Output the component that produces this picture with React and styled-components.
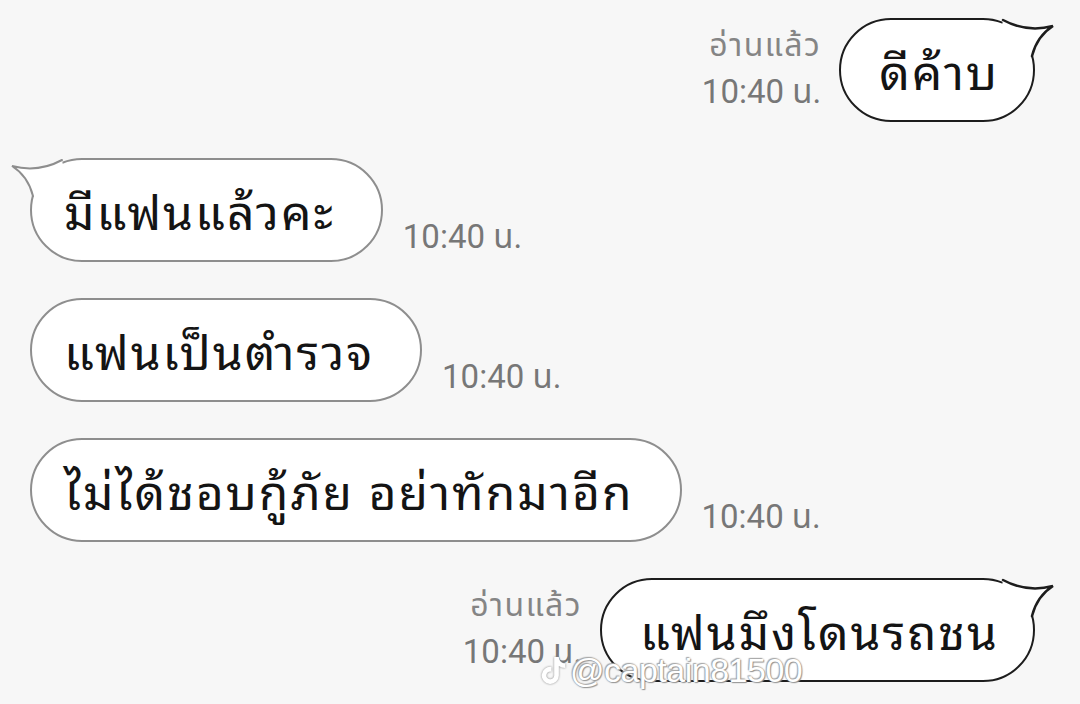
import React from 'react'
import styled, { createGlobalStyle } from 'styled-components'
import { FaTiktok } from 'react-icons/fa'

const GlobalStyle = createGlobalStyle`
body {
  margin: 0;
  background: #f7f7f7;
}
`

const Chat = styled.div`
position: relative;
display: flex;
flex-direction: column;
gap: 36px;
width: 1080px;
height: 704px;
box-sizing: border-box;
padding: 18px 45px 0 30px;
overflow: hidden;
background: #f7f7f7;
font-family: "Noto Sans Thai Looped", "Noto Sans Thai", "Noto Sans", sans-serif;
`

const Row = styled.div`
display: flex;
align-items: flex-end;
justify-content: ${p => (p.$sent ? 'flex-end' : 'flex-start')};
`

const Bubble = styled.div`
position: relative;
display: flex;
align-items: center;
height: 104px;
box-sizing: border-box;
padding: ${p => (p.$sent ? '0 34px 4px 38px' : '0 46px 4px 32px')};
border: ${p => (p.$sent ? '2.5px solid #1d1d1d' : '2px solid #8e8e8e')};
border-radius: 52px;
background: #fff;
color: #141414;
font-size: 48px;
letter-spacing: 2px;
white-space: nowrap;
`

const Tail = styled.svg`
position: absolute;
top: -2px;
${p => (p.$sent ? 'right: -22px; transform: scaleX(-1);' : 'left: -22px;')}
width: 60px;
height: 50px;
overflow: visible;
`

const Time = styled.div`
font-family: Roboto, "Noto Sans Thai", sans-serif;
font-size: 33px;
color: #777;
line-height: 1;
white-space: nowrap;
`

const Stamp = styled(Time)`
margin: 0 0 9px 20px;
`

const Meta = styled.div`
display: flex;
flex-direction: column;
align-items: flex-end;
gap: 14px;
margin: 0 18px 14px 0;
`

const Read = styled(Time)`
font-size: 32px;
letter-spacing: 1.5px;
color: #858585;
`

const Watermark = styled.div`
position: absolute;
left: 540px;
top: 651px;
display: flex;
align-items: center;
gap: 3px;
font-family: "Liberation Sans", Arial, sans-serif;
font-size: 34px;
letter-spacing: -0.5px;
color: #fff;
text-shadow: 0 0 2px #8a8a8a, 1px 1px 1px #9a9a9a, -1px -1px 1px #b0b0b0;
svg {
  filter: drop-shadow(0 0 1px #888);
}
`

function BubbleTail({ sent, stroke }) {
  return (
    <Tail $sent={sent} viewBox="-20 0 60 50">
      <path d="M3 38 Q-2 18 -18 8 Q8 15 32 2 L40 44 Z" fill="#fff" />
      <path
        d="M3 38 Q-2 18 -18 8 Q8 15 32 2"
        fill="none"
        stroke={stroke}
        strokeWidth={sent ? 2.5 : 2}
        strokeLinecap="round"
      />
    </Tail>
  )
}

const messages = [
  { sent: true, text: 'ดีค้าบ', tail: true },
  { sent: false, text: 'มีแฟนแล้วคะ', tail: true },
  { sent: false, text: 'แฟนเป็นตำรวจ' },
  { sent: false, text: 'ไม่ได้ชอบกู้ภัย อย่าทักมาอีก' },
  { sent: true, text: 'แฟนมึงโดนรถชน', tail: true },
]

export default function App() {
  return (
    <>
      <GlobalStyle />
      <Chat>
        {messages.map((m, i) =>
          m.sent ? (
            <Row key={i} $sent>
              <Meta>
                <Read>อ่านแล้ว</Read>
                <Time>10:40 น.</Time>
              </Meta>
              <Bubble $sent>
                {m.tail && <BubbleTail sent stroke="#1d1d1d" />}
                {m.text}
              </Bubble>
            </Row>
          ) : (
            <Row key={i}>
              <Bubble>
                {m.tail && <BubbleTail stroke="#8e8e8e" />}
                {m.text}
              </Bubble>
              <Stamp>10:40 น.</Stamp>
            </Row>
          )
        )}
        <Watermark>
          <FaTiktok size={27} />
          <span>@captain81500</span>
        </Watermark>
      </Chat>
    </>
  )
}
